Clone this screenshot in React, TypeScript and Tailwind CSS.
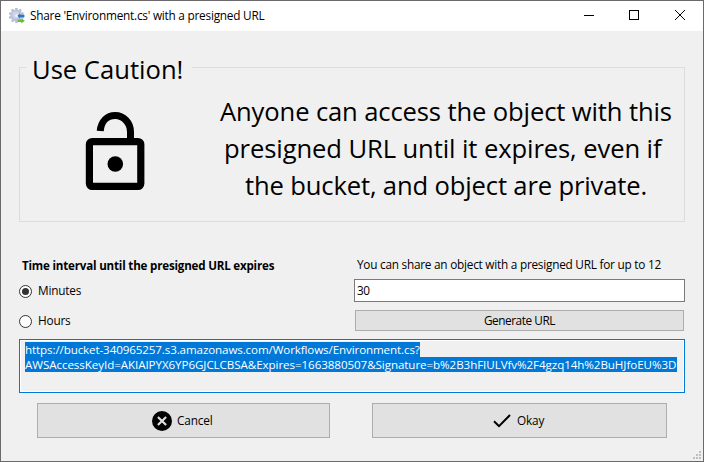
import type { ReactNode } from "react";

function GearIcon() {
  const teeth = [0, 36, 72, 108, 144, 180, 216, 252, 288, 324];
  return (
    <svg width="16" height="16" viewBox="0 0 16 16" className="shrink-0">
      <g fill="#b3b9d2">
        {teeth.map((a) => (
          <rect key={a} x="6.2" y="-0.1" width="2.4" height="3.5" rx="0.5" transform={`rotate(${a} 7.4 7.5)`} />
        ))}
        <circle cx="7.4" cy="7.5" r="6" fill="#bdc3db" />
      </g>
      <circle cx="6.8" cy="6.8" r="3.4" fill="#cfd5e6" />
      <circle cx="7.6" cy="7.7" r="1.4" fill="#f4f6fa" />
      <path d="M8.4 7.8 11 5.6v1.1h4.4v2.6H11v1.2z" fill="#2676c4" />
      <path d="M15.8 12.7 12.4 10.2v1.2H8.6v2.6h3.8v1.5z" fill="#69bd32" />
    </svg>
  );
}

function LockIcon() {
  return (
    <svg width="60" height="86" viewBox="0 0 60 86" fill="none" stroke="#000" className="block shrink-0">
      <path d="M15.2 24C16.2 14.5 22 8.6 30.2 8.6S45.5 15.5 45.5 25v10" strokeWidth="7" />
      <rect x="4.4" y="34.6" width="51.4" height="44.8" rx="2.8" strokeWidth="7.2" />
      <circle cx="30.3" cy="57" r="7.8" fill="#000" stroke="none" />
    </svg>
  );
}

function TitleBar() {
  return (
    <header className="flex h-[30px] shrink-0 items-center bg-white pl-2">
      <GearIcon />
      <span className="ml-[5px] grow text-[11.8px] tracking-[-0.23px] whitespace-nowrap">
        Share 'Environment.cs' with a presigned URL
      </span>
      <svg width="138" height="30" viewBox="0 0 138 30" fill="none" stroke="#000">
        <path d="M19 14.5h10" />
        <rect x="64.5" y="9.5" width="9" height="9" shapeRendering="crispEdges" />
        <path d="m110 9 10 10m0-10-10 10" />
      </svg>
    </header>
  );
}

function Radio({ label, checked }: { label: string; checked?: boolean }) {
  return (
    <div className="flex h-[30px] items-center">
      <span className="flex size-[13px] items-center justify-center rounded-full border border-[#333] bg-white">
        {checked && <span className="size-[7px] rounded-full bg-[#333]" />}
      </span>
      <span className="ml-[6px] text-[11.8px] tracking-[-0.2px]">{label}</span>
    </div>
  );
}

function DialogButton({ className, children }: { className: string; children: ReactNode }) {
  return (
    <button className={`flex items-center border border-[#adadad] bg-[#e1e1e1] ${className}`}>{children}</button>
  );
}

export default function App() {
  return (
    <div className="relative flex h-[462px] w-[704px] flex-col overflow-hidden border border-[#6b696b] bg-[#f0f0f0] font-['Open_Sans','Noto_Sans',sans-serif] text-black">
      <TitleBar />

      <fieldset className="mt-[22px] ml-[18px] h-[169px] w-[666px] min-w-0 shrink-0 border border-[#dcdcdc] pl-[6px]">
        <legend className="h-[28px] w-[166px] pl-[6px] text-[25.6px] leading-[34px] whitespace-nowrap">Use Caution!</legend>
        <div className="flex">
          <div className="ml-[59px] shrink-0 pt-[26px]">
            <LockIcon />
          </div>
          <div className="ml-[57px] w-[488px] shrink-0 pt-[12px] text-[25.6px] leading-[37px] whitespace-nowrap">
            <p className="pl-[18px] tracking-[-0.13px]">Anyone can access the object with this</p>
            <p className="pl-[22px] tracking-[-0.1px]">presigned URL until it expires, even if</p>
            <p className="pl-[43px] tracking-[-0.15px]">the bucket, and object are private.</p>
          </div>
        </div>
      </fieldset>

      <div className="mt-[35px] ml-[18px] flex h-[83px] shrink-0">
        <div className="w-[335px]">
          <h2 className="h-[19px] pl-[3px] text-[11.6px] leading-[18px] font-bold tracking-[-0.2px] whitespace-nowrap">
            Time interval until the presigned URL expires
          </h2>
          <Radio label="Minutes" checked />
          <Radio label="Hours" />
        </div>
        <div className="flex w-[331px] flex-col">
          <p className="h-[22px] pl-[3px] text-[11.8px] leading-[14px] tracking-[-0.24px] whitespace-nowrap">
            You can share an object with a presigned URL for up to 12
          </p>
          <div className="h-[23px] border border-[#7a7a7a] bg-white pl-[2px] text-[11.8px] leading-[20px] tracking-[-0.4px]">30</div>
          <DialogButton className="mx-px mt-[8px] h-[21px] justify-center text-[11.8px] tracking-[-0.43px]">Generate URL</DialogButton>
        </div>
      </div>

      <div className="mt-[-1px] ml-[18px] h-[54px] w-[666px] shrink-0 border border-[#0078d7]">
        <div className="h-full border border-white pt-px pl-[4px] text-[11.6px] leading-[15px] whitespace-nowrap text-white">
          <div className="h-[15px] w-[395px] bg-[#0078d7]">
            <span className="tracking-[-0.11px]">https://bucket-340965257.s3.amazonaws.com/Workflows/Environment.cs?</span>
          </div>
          <div className="h-[15px] w-[652px] bg-[#0078d7]">
            <span className="tracking-[-0.07px]">AWSAccessKeyId=AKIAIPYX6YP6GJCLCBSA&amp;Expires=1663880507&amp;Signature=b%2B3hFIULVfv%2F4gzq14h%2BuHJfoEU%3D</span>
          </div>
        </div>
      </div>

      <div className="mt-[10px] ml-[36px] flex h-[35px] shrink-0 gap-[42px] text-[11.8px] tracking-[-0.15px]">
        <DialogButton className="w-[293px] pl-[114px]">
          <svg width="20" height="20" viewBox="0 0 20 20">
            <circle cx="10" cy="10" r="10" />
            <path d="m5.9 5.9 8.2 8.2m0-8.2-8.2 8.2" stroke="#e1e1e1" strokeWidth="2.1" />
          </svg>
          <span className="ml-[5px]">Cancel</span>
        </DialogButton>
        <DialogButton className="w-[295px] pl-[120px]">
          <svg width="18" height="14" viewBox="0 0 18 14" fill="none" stroke="#000" strokeWidth="2">
            <path d="m1 7.2 5 5L17 1" />
          </svg>
          <span className="ml-[6px]">Okay</span>
        </DialogButton>
      </div>

      <svg className="absolute right-[2px] bottom-[2px]" width="8" height="8" viewBox="0 0 8 8" fill="#bfbfbf" shapeRendering="crispEdges">
        <path d="M6 0h2v2H6zM3 3h2v2H3zM6 3h2v2H6zM0 6h2v2H0zM3 6h2v2H3zM6 6h2v2H6z" />
      </svg>
    </div>
  );
}
